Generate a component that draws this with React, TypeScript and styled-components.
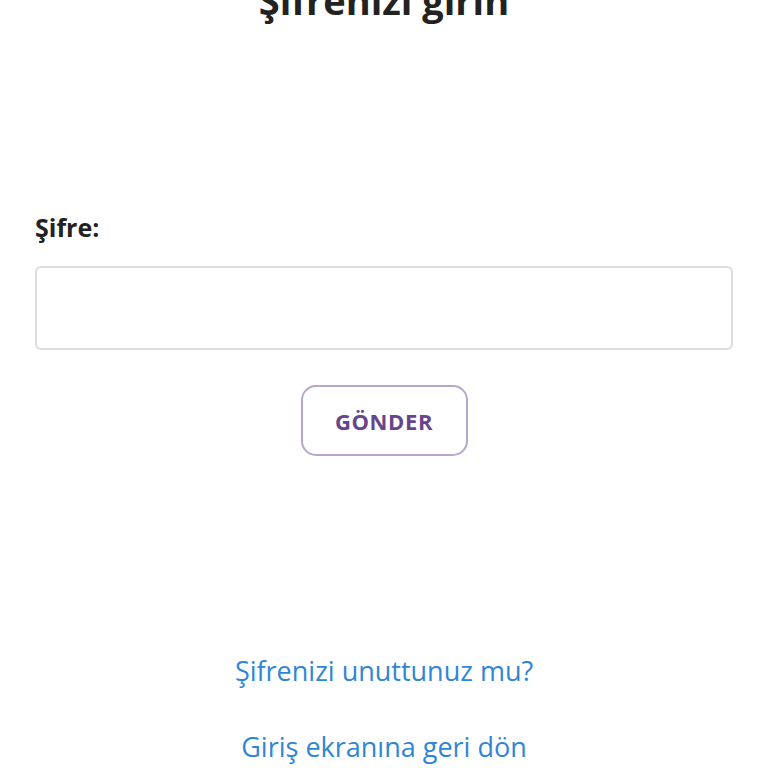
import * as React from "react";
import styled, { createGlobalStyle } from "styled-components";

const GlobalStyle = createGlobalStyle`
  html, body {
    margin: 0;
    padding: 0;
    background: #ffffff;
    overflow: hidden;
  }
  body {
    font-family: "Open Sans", Lato, "Liberation Sans", sans-serif;
  }
`;

const Page = styled.div`
  display: flex;
  flex-direction: column;
  padding: 0 35px;
  margin-top: -24px;
`;

const Title = styled.h1`
  margin: 0;
  text-align: center;
  font-size: 38px;
  font-weight: 700;
  line-height: 48px;
  color: #222222;
`;

const Form = styled.form`
  display: flex;
  flex-direction: column;
  margin-top: 187px;
`;

const Label = styled.label`
  font-size: 25px;
  font-weight: 700;
  color: #222222;
  line-height: 32px;
`;

const Input = styled.input`
  box-sizing: border-box;
  margin-top: 23px;
  width: 100%;
  height: 84px;
  border: 2px solid #dcdcdc;
  border-radius: 6px;
  padding: 0 16px;
  font-size: 24px;
  font-family: inherit;
  outline: none;
`;

const SubmitButton = styled.button`
  align-self: center;
  margin-top: 35px;
  width: 167px;
  height: 71px;
  background: #ffffff;
  border: 2px solid #b9a6cc;
  border-radius: 15px;
  color: #66468b;
  font-family: inherit;
  font-size: 22px;
  font-weight: 700;
  letter-spacing: 0.6px;
  cursor: pointer;
`;

const Links = styled.div`
  display: flex;
  flex-direction: column;
  align-items: center;
  gap: 42px;
  margin-top: 198px;
`;

const TextLink = styled.a`
  color: #2f86d4;
  font-size: 27px;
  line-height: 34px;
  text-decoration: none;
  cursor: pointer;
`;

const App: React.FC = () => {
  return (
    <>
      <GlobalStyle />
      <Page>
        <Title>Şifrenizi girin</Title>
        <Form onSubmit={(e) => e.preventDefault()}>
          <Label htmlFor="password">Şifre:</Label>
          <Input id="password" type="password" />
          <SubmitButton type="submit">GÖNDER</SubmitButton>
        </Form>
        <Links>
          <TextLink>Şifrenizi unuttunuz mu?</TextLink>
          <TextLink>Giriş ekranına geri dön</TextLink>
        </Links>
      </Page>
    </>
  );
};

export default App;
